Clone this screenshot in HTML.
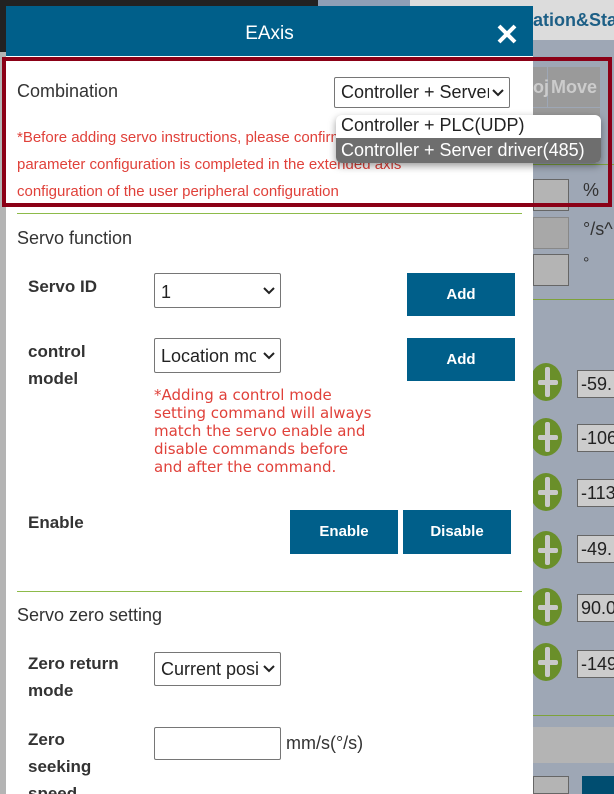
<!DOCTYPE html>
<html><head><meta charset="utf-8">
<style>
*{margin:0;padding:0;box-sizing:border-box}
html,body{width:614px;height:794px;overflow:hidden}
body{position:relative;background:#9ea7b5;font-family:"Liberation Sans",Arial,sans-serif}
.a{position:absolute}
.lbl{position:absolute;font-weight:bold;font-size:17px;color:#333;line-height:28px}
.sel{position:absolute;border:1px solid #767676;border-radius:2px;background:#fff;font-size:18px;color:#222;padding-left:6px;white-space:nowrap}
.sel span{display:block;overflow:hidden}
.sel svg{position:absolute;right:5px;top:50%;margin-top:-4px}
.btn{position:absolute;background:#005f8a;color:#fff;font-weight:bold;font-size:15px;text-align:center}
.plus{position:absolute;width:32px;height:38px;border-radius:50%;background:#6a8f2a;left:530px}
.plus:before{content:"";position:absolute;left:8px;top:17px;width:20px;height:5px;background:#c9c9c9;border-radius:2px}
.plus:after{content:"";position:absolute;left:15px;top:4px;width:5px;height:30px;background:#c9c9c9;border-radius:2px}
.val{position:absolute;left:577px;width:50px;height:28px;border:1px solid #666;background:#ccc;font-size:18px;line-height:26px;padding-left:3px;color:#222}
</style></head><body>
<div class="a" style="left:0;top:0;width:318px;height:6px;background:#222"></div>
<div class="a" style="left:0;top:0;width:6px;height:52px;background:#222"></div>
<div class="a" style="left:0;top:52px;width:6px;height:742px;background:#b4b4b4"></div>
<div class="a" style="left:318px;top:0;width:92px;height:40px;background:#8e9fb6"></div>
<div class="a" style="left:410px;top:0;width:204px;height:40px;background:#dcdcdc"></div>
<div class="a" style="left:533px;top:10px;font-size:18px;font-weight:bold;color:#1d5f86">ation&amp;Sta</div>
<div class="a" style="left:533px;top:67px;width:14px;height:40px;background:#9a9a9a;color:#ccc;font-weight:bold;font-size:18px;line-height:40px">oj</div>
<div class="a" style="left:548px;top:67px;width:52px;height:40px;background:#9a9a9a;color:#ccc;font-weight:bold;font-size:18px;line-height:40px;text-align:center">Move</div>
<div class="a" style="left:533px;top:108px;width:67px;height:30px;background:#9a9a9a"></div>
<div class="a" style="left:533px;top:164px;width:81px;height:1px;background:#7ea23a"></div>
<div class="a" style="left:533px;top:179px;width:36px;height:32px;background:#b4b4b4;border:1px solid #666"></div>
<div class="a" style="left:583px;top:180px;font-size:18px;color:#333">%</div>
<div class="a" style="left:533px;top:217px;width:36px;height:32px;background:#a8a8a8;border:1px solid #888"></div>
<div class="a" style="left:583px;top:219px;font-size:18px;color:#333">°/s^</div>
<div class="a" style="left:533px;top:254px;width:36px;height:32px;background:#b4b4b4;border:1px solid #666"></div>
<div class="a" style="left:583px;top:255px;font-size:16px;color:#333">°</div>
<div class="a" style="left:533px;top:299px;width:81px;height:1px;background:#7ea23a"></div>
<div class="plus" style="top:363px"></div><div class="val" style="top:370px">-59.</div>
<div class="plus" style="top:418px"></div><div class="val" style="top:424px">-106</div>
<div class="plus" style="top:473px"></div><div class="val" style="top:479px">-113</div>
<div class="plus" style="top:531px"></div><div class="val" style="top:535px">-49.</div>
<div class="plus" style="top:588px"></div><div class="val" style="top:594px">90.0</div>
<div class="plus" style="top:643px"></div><div class="val" style="top:650px">-149</div>
<div class="a" style="left:533px;top:715px;width:81px;height:1px;background:#7ea23a"></div>
<div class="a" style="left:533px;top:727px;width:81px;height:36px;background:#b4b4b4"></div>
<div class="a" style="left:533px;top:776px;width:36px;height:18px;background:#b4b4b4;border:1px solid #666"></div>
<div class="a" style="left:582px;top:776px;width:32px;height:18px;background:#004d70"></div>

<div class="a" style="left:6px;top:6px;width:527px;height:788px;background:#fff"></div>
<div class="a" style="left:6px;top:6px;width:527px;height:50px;background:#005f8a;color:#fff;font-size:19px;text-align:center;line-height:56px">EAxis</div>
<svg class="a" style="left:497px;top:24px" width="20" height="20" viewBox="0 0 20 20"><path d="M2 2L18 18M18 2L2 18" stroke="#fff" stroke-width="4"/></svg>

<div class="a" style="left:17px;top:81px;font-size:18px;color:#333">Combination</div>
<div class="sel" style="left:334px;top:77px;width:176px;height:31px;line-height:29px;padding-right:20px"><span>Controller + Server driver</span><svg width="12" height="8"><path d="M1 1L6 6L11 1" stroke="#222" stroke-width="2" fill="none"/></svg></div>
<div class="a" style="left:17px;top:124px;font-size:15px;color:#e0413a;line-height:27px;width:500px">*Before adding servo instructions, please confirm that the<br>parameter configuration is completed in the extended axis<br>configuration of the user peripheral configuration</div>
<div class="a" style="left:17px;top:213px;width:505px;height:1px;background:#8dbb4a"></div>

<div class="a" style="left:336px;top:115px;width:265px;height:48px;background:#fff;border-radius:6px;box-shadow:0 3px 8px rgba(0,0,0,.4);overflow:hidden">
<div style="height:23px;font-size:18px;color:#222;line-height:21px;padding-left:5px">Controller + PLC(UDP)</div>
<div style="height:25px;background:#6e6e6e;font-size:18px;color:#fff;line-height:24px;padding-left:5px">Controller + Server driver(485)</div>
</div>
<div class="a" style="left:2px;top:57px;width:610px;height:150px;border:4px solid #8b0016"></div>

<div class="a" style="left:17px;top:228px;font-size:18px;color:#333">Servo function</div>
<div class="lbl" style="left:28px;top:273px">Servo ID</div>
<div class="sel" style="left:154px;top:273px;width:127px;height:35px;line-height:36px">1<svg width="12" height="8"><path d="M1 1L6 6L11 1" stroke="#222" stroke-width="2" fill="none"/></svg></div>
<div class="btn" style="left:407px;top:273px;width:108px;height:43px;line-height:43px">Add</div>
<div class="lbl" style="left:28px;top:338px;line-height:27px">control<br>model</div>
<div class="sel" style="left:154px;top:338px;width:127px;height:35px;line-height:34px;padding-right:24px"><span>Location mode</span><svg width="12" height="8"><path d="M1 1L6 6L11 1" stroke="#222" stroke-width="2" fill="none"/></svg></div>
<div class="btn" style="left:407px;top:338px;width:108px;height:43px;line-height:43px">Add</div>
<div class="a" style="left:154px;top:386px;color:#e0413a;line-height:18px;font-family:'DejaVu Sans','Liberation Sans',sans-serif;font-size:15px">*Adding a control mode<br>setting command will always<br>match the servo enable and<br>disable commands before<br>and after the command.</div>
<div class="lbl" style="left:28px;top:509px">Enable</div>
<div class="btn" style="left:290px;top:510px;width:108px;height:44px;line-height:44px">Enable</div>
<div class="btn" style="left:403px;top:510px;width:108px;height:44px;line-height:44px">Disable</div>
<div class="a" style="left:17px;top:591px;width:505px;height:1px;background:#8dbb4a"></div>
<div class="a" style="left:17px;top:605px;font-size:18px;color:#333">Servo zero setting</div>
<div class="lbl" style="left:28px;top:650px;line-height:27px">Zero return<br>mode</div>
<div class="sel" style="left:154px;top:652px;width:127px;height:34px;line-height:33px;padding-right:22px"><span>Current position</span><svg width="12" height="8"><path d="M1 1L6 6L11 1" stroke="#222" stroke-width="2" fill="none"/></svg></div>
<div class="lbl" style="left:28px;top:726px;line-height:27px">Zero<br>seeking<br>speed</div>
<div class="a" style="left:154px;top:727px;width:127px;height:33px;border:1px solid #767676;border-radius:2px"></div>
<div class="a" style="left:286px;top:733px;font-size:18px;color:#333">mm/s(°/s)</div>
</body></html>
